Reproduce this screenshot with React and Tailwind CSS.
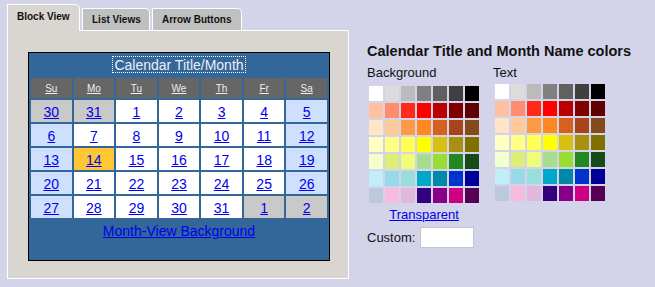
import React from 'react';

const swatches = [
  ['#ffffff', '#dcdcdc', '#bbbbbb', '#808080', '#606060', '#404040', '#000000'],
  ['#ffc0a0', '#ff8c6c', '#ff2a1a', '#ff0000', '#b80000', '#800000', '#600000'],
  ['#ffe4c8', '#ffca98', '#ff9a44', '#ff8822', '#d8601e', '#a8441a', '#844a1a'],
  ['#ffffc0', '#ffff88', '#ffff55', '#ffff00', '#d8c010', '#aa9010', '#807000'],
  ['#f4ffd0', '#ddee77', '#eeff77', '#a8dd90', '#99dd33', '#228822', '#184a18'],
  ['#c0eef8', '#99d8e8', '#99dddd', '#00a8c8', '#0088a8', '#0033cc', '#000099'],
  ['#bcc8dc', '#f8bbe0', '#e0b8dd', '#330080', '#880088', '#cc0080', '#550050'],
];

const days = ['Su', 'Mo', 'Tu', 'We', 'Th', 'Fr', 'Sa'];

// kind: o = other month, w = weekend, t = today, d = weekday
const weeks = [
  [[30, 'o'], [31, 'o'], [1, 'd'], [2, 'd'], [3, 'd'], [4, 'd'], [5, 'w']],
  [[6, 'w'], [7, 'd'], [8, 'd'], [9, 'd'], [10, 'd'], [11, 'd'], [12, 'w']],
  [[13, 'w'], [14, 't'], [15, 'd'], [16, 'd'], [17, 'd'], [18, 'd'], [19, 'w']],
  [[20, 'w'], [21, 'd'], [22, 'd'], [23, 'd'], [24, 'd'], [25, 'd'], [26, 'w']],
  [[27, 'w'], [28, 'd'], [29, 'd'], [30, 'd'], [31, 'd'], [1, 'o'], [2, 'o']],
];

const cellBg = {
  o: 'bg-[#c9c9c9]',
  w: 'bg-[#cfe0ff]',
  t: 'bg-[#fdc833]',
  d: 'bg-white',
};

function Swatches() {
  return (
    <div className="grid grid-cols-[repeat(7,14px)] gap-[2px]">
      {swatches.flat().map((c, i) => (
        <div key={i} className="h-[15px]" style={{ backgroundColor: c }} />
      ))}
    </div>
  );
}

function Calendar() {
  return (
    <div className="w-[302px] h-[209px] border border-black bg-[#336699] px-[2px]">
      {/* Title */}
      <div className="h-[25px] flex justify-center pt-[3px]">
        <span className="h-[17px] leading-[17px] px-px text-[14px] text-[#eeeef6] border border-dotted border-white">
          Calendar Title/Month
        </span>
      </div>

      {/* Day grid */}
      <div className="grid grid-cols-7 gap-[2px]">
        {days.map((d) => (
          <div key={d} className="h-[20px] bg-[#666666] text-center pt-[2px] leading-[18px] text-[10px] text-[#eeeeee] underline">
            {d}
          </div>
        ))}
        {weeks.flat().map(([n, k], i) => (
          <div key={i} className={`h-[22px] ${cellBg[k]} text-center pt-[2px] leading-[20px] text-[14px] text-[#0000ee] underline`}>
            {n}
          </div>
        ))}
      </div>

      <div className="mt-[5px] text-center text-[14px] leading-[16px] text-[#0000ee] underline">
        Month-View Background
      </div>
    </div>
  );
}

export default function App() {
  return (
    <div className="w-[655px] h-[287px] overflow-hidden bg-[#d3d3e9] flex pl-[7px] pt-[4px] font-['Liberation_Sans',Arial,sans-serif] text-[#111111]">
      {/* Tabs + panel */}
      <div className="w-[342px] flex flex-col">
        <div className="h-[27px] -mb-px flex items-end gap-[2px] relative z-10 text-[10px] font-bold leading-[12px]">
          <div className="w-[73px] h-[27px] bg-[#d9d5d0] border-l border-t border-r border-white rounded-tr-[5px] pl-[9px] pt-[6px]">
            Block View
          </div>
          <div className="w-[68px] h-[22px] mb-px bg-[#c0c0c0] border-l border-t border-r border-white rounded-tr-[5px] pl-[9px] pt-[5px]">
            List Views
          </div>
          <div className="w-[90px] h-[22px] mb-px bg-[#c0c0c0] border-l border-t border-r border-white rounded-tr-[5px] pl-[9px] pt-[5px]">
            Arrow Buttons
          </div>
        </div>
        <div className="h-[249px] border border-white bg-[#d9d5d0] pl-[20px] pt-[21px]">
          <Calendar />
        </div>
      </div>

      {/* Color picker */}
      <div className="ml-[18px] pt-[39px] flex flex-col">
        <div className="text-[14.5px] font-bold leading-[17px]">Calendar Title and Month Name colors</div>
        <div className="mt-[5px] flex">
          <div className="w-[126px] flex flex-col">
            <div className="text-[13px] leading-[15px]">Background</div>
            <div className="mt-[6px] ml-[2px]">
              <Swatches />
            </div>
            <div className="mt-[4px] ml-[2px] w-[110px] text-center text-[13px] leading-[15px] text-[#0000ee] underline">
              Transparent
            </div>
            <div className="mt-[5px] flex items-center">
              <span className="text-[13px] leading-[15px]">Custom:</span>
              <input className="ml-[5px] w-[54px] h-[21px] bg-white border border-[#c4c4cc] outline-none" />
            </div>
          </div>
          <div className="flex flex-col">
            <div className="text-[13px] leading-[15px]">Text</div>
            <div className="mt-[4px] ml-[2px]">
              <Swatches />
            </div>
          </div>
        </div>
      </div>
    </div>
  );
}
